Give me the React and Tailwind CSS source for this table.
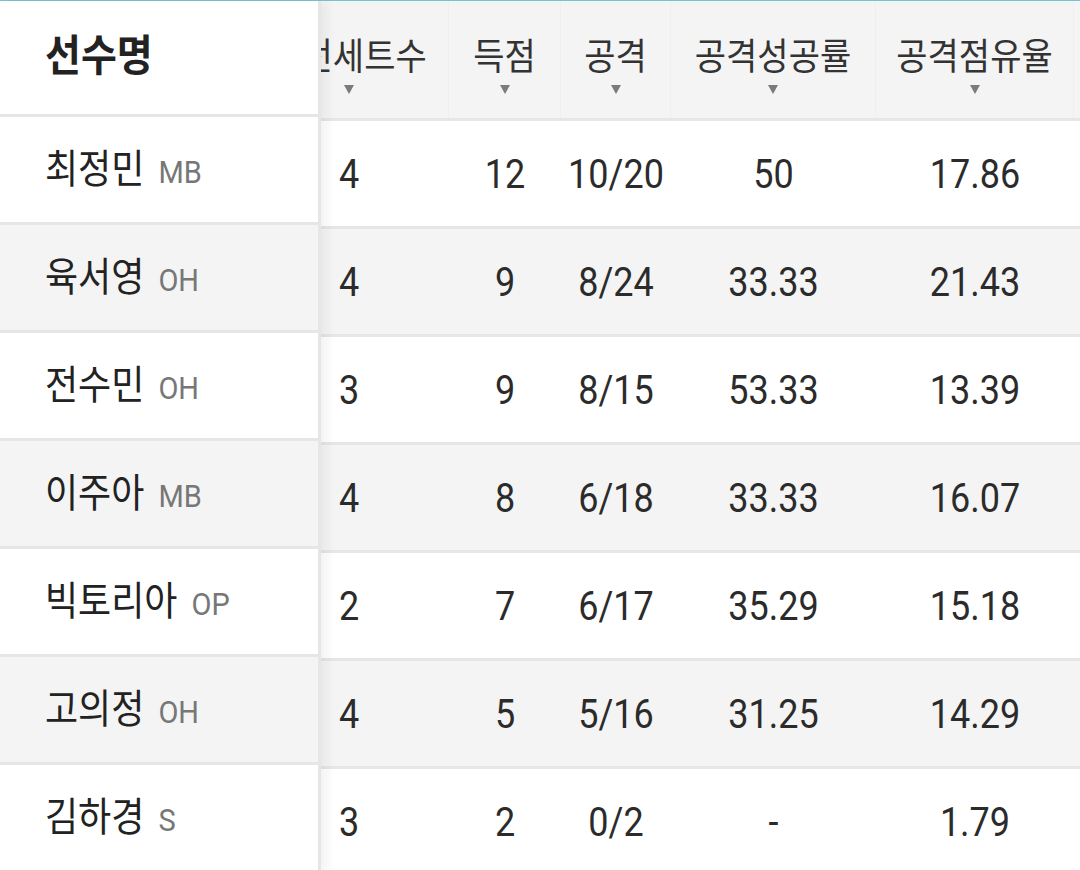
const players = [
  { name: "최정민", pos: "MB", sets: "4", pts: "12", atk: "10/20", rate: "50", share: "17.86" },
  { name: "육서영", pos: "OH", sets: "4", pts: "9", atk: "8/24", rate: "33.33", share: "21.43" },
  { name: "전수민", pos: "OH", sets: "3", pts: "9", atk: "8/15", rate: "53.33", share: "13.39" },
  { name: "이주아", pos: "MB", sets: "4", pts: "8", atk: "6/18", rate: "33.33", share: "16.07" },
  { name: "빅토리아", pos: "OP", sets: "2", pts: "7", atk: "6/17", rate: "35.29", share: "15.18" },
  { name: "고의정", pos: "OH", sets: "4", pts: "5", atk: "5/16", rate: "31.25", share: "14.29" },
  { name: "김하경", pos: "S", sets: "3", pts: "2", atk: "0/2", rate: "-", share: "1.79" },
];

const columns = [
  { key: "sets", label: "출전세트수", width: "w-[200px]" },
  { key: "pts", label: "득점", width: "w-[112px]" },
  { key: "atk", label: "공격", width: "w-[110px]" },
  { key: "rate", label: "공격성공률", width: "w-[205px]" },
  { key: "share", label: "공격점유율", width: "w-[198px]" },
  { key: "extra", label: "", width: "w-[160px]" },
];

const SortArrow = () => (
  <svg width="10" height="9" viewBox="0 0 10 9" className="mt-[11px]">
    <path d="M0 0h10L5 9z" fill="#7b7b7b" />
  </svg>
);

export default function App() {
  return (
    <div className="h-[870px] w-[1080px] overflow-hidden bg-white font-['Roboto','Noto_Sans_CJK_KR',sans-serif] text-[#2b2b2b]">
      <div className="h-px bg-[#74c4cd]" />
      <div className="flex">
        {/* sticky player column */}
        <div className="relative z-10 w-[321px] shrink-0 border-r-[3px] border-[#e6e6e6] bg-white shadow-[6px_0_10px_rgba(0,0,0,0.05)]">
          <div className="flex h-[113px] items-center pl-[45px]">
            <span className="inline-block scale-y-110 text-[39px] font-bold leading-none text-[#222]">선수명</span>
          </div>
          {players.map((p, i) => (
            <div
              key={p.name}
              className={`flex h-[108px] items-center border-t-[3px] border-[#e6e6e6] pl-[45px] ${
                i % 2 === 1 ? "bg-[#f4f4f4]" : "bg-white"
              }`}
            >
              <div className="flex scale-y-110 items-baseline leading-none">
                <span className="text-[36px] text-[#222]">{p.name}</span>
                <span className="ml-[14px] text-[29px] text-[#777]">{p.pos}</span>
              </div>
            </div>
          ))}
        </div>

        {/* scrolled stats */}
        <div className="flex-1 overflow-hidden">
          <div className="-ml-[72px] w-max">
            <div className="flex h-[117px] bg-[#f4f4f4]">
              {columns.map((c) => (
                <div
                  key={c.key}
                  className={`${c.width} flex shrink-0 flex-col items-center justify-center border-r border-[#efefef] pt-[14px]`}
                >
                  {c.label && (
                    <>
                      <span className="inline-block scale-y-110 whitespace-nowrap text-[34px] leading-none text-[#333]">
                        {c.label}
                      </span>
                      <SortArrow />
                    </>
                  )}
                </div>
              ))}
            </div>
            {players.map((p, i) => (
              <div
                key={p.name}
                className={`flex h-[108px] border-t-[3px] border-[#e6e6e6] ${
                  i % 2 === 1 ? "bg-[#f4f4f4]" : "bg-white"
                }`}
              >
                {columns.map((c) => (
                  <div key={c.key} className={`${c.width} flex shrink-0 items-center justify-center`}>
                    <span className="inline-block scale-y-115 text-[36px] leading-none text-[#2b2b2b]">
                      {p[c.key]}
                    </span>
                  </div>
                ))}
              </div>
            ))}
          </div>
        </div>
      </div>
    </div>
  );
}
